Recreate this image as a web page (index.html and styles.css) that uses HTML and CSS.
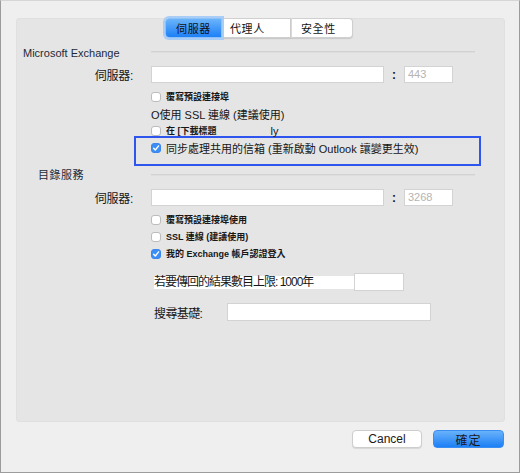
FILE: index.html
```html
<!DOCTYPE html>
<html lang="zh-Hant">
<head>
  <meta charset="UTF-8">
  <meta name="viewport" content="width=device-width, initial-scale=1.0">
  <title>Exchange 帳戶設定</title>
  <link rel="stylesheet" href="styles.css">
</head>
<body>
  <div class="window">
    <div class="panel">
      <div class="tabs">
        <span class="tab tab-active">伺服器</span>
        <span class="tab tab-mid">代理人</span>
        <span class="tab tab-last">安全性</span>
      </div>

      <div class="section-head">
        <span class="head-title">Microsoft Exchange</span>
        <span class="rule"></span>
      </div>
      <div class="field-row">
        <span class="field-label">伺服器:</span>
        <span class="input wide"></span>
        <span class="colon">:</span>
        <span class="input port">443</span>
      </div>
      <div class="checks">
        <div class="check-row"><span class="box"></span><span class="small">覆寫預設連接埠</span></div>
        <div class="check-row plain">O使用 SSL 連線 (建議使用)</div>
        <div class="check-row"><span class="box"></span><span class="small">在 [下載標題</span><span class="trail">ly</span></div>
        <div class="highlight">
          <div class="check-row plain"><span class="box box-on"><svg viewBox="0 0 10 10" width="10" height="10"><path d="M2.6 5.2 L4.3 7 L7.6 2.9" fill="none" stroke="#fff" stroke-width="1.4" stroke-linecap="round" stroke-linejoin="round"/></svg></span>同步處理共用的信箱 (重新啟動 Outlook 讓變更生效)</div>
        </div>
      </div>

      <div class="section-head head-two">
        <span class="head-title indent">目錄服務</span>
        <span class="rule"></span>
      </div>
      <div class="field-row row-two">
        <span class="field-label">伺服器:</span>
        <span class="input wide"></span>
        <span class="colon">:</span>
        <span class="input port">3268</span>
      </div>
      <div class="checks">
        <div class="check-row"><span class="box"></span><span class="small">覆寫預設連接埠使用</span></div>
        <div class="check-row"><span class="box"></span><span class="small">SSL 連線 (建議使用)</span></div>
        <div class="check-row"><span class="box box-on"><svg viewBox="0 0 10 10" width="10" height="10"><path d="M2.6 5.2 L4.3 7 L7.6 2.9" fill="none" stroke="#fff" stroke-width="1.4" stroke-linecap="round" stroke-linejoin="round"/></svg></span><span class="small">我的 Exchange 帳戶認證登入</span></div>
      </div>

      <div class="limit-row">
        <span class="limit-text">若要傳回的結果數目上限: 1000年</span>
        <span class="input limit"></span>
      </div>
      <div class="search-row">
        <span class="search-label">搜尋基礎:</span>
        <span class="input search"></span>
      </div>
    </div>

    <div class="actions">
      <button class="btn btn-cancel">Cancel</button>
      <button class="btn btn-ok">確定</button>
    </div>
  </div>
</body>
</html>
```

FILE: styles.css
```css
body{
  margin: 0;
  background-color: #ececec;
  font-family: "Liberation Sans", "Noto Sans CJK TC", sans-serif;
  color: #161616;
}
.window{
  width: 520px;
  height: 473px;
  box-sizing: border-box;
  border: 1px solid #9c9c9c;
  border-top-color: #d6d6d6;
  background-color: #efefef;
  padding: 27px 14px 0 15px;
}
.panel{
  height: 404px;
  background-color: #e5e5e5;
  border-radius: 4px;
  box-shadow: inset 0 0 0 1px #e0e0e0;
}

/* tabs */
.tabs{
  display: flex;
  justify-content: center;
  margin-top: -10px;
  padding-right: 3px;
  height: 20px;
}
.tab{
  height: 20px;
  box-sizing: border-box;
  font-size: 11px;
  letter-spacing: 0.6px;
  line-height: 20px;
  background-color: #fff;
  border: 1px solid #cfcfcf;
  box-shadow: 0 1px 1px rgba(0,0,0,0.12);
}
.tab-active{
  width: 57px;
  text-align: center;
  border-radius: 4px 0 0 4px;
  border-color: #8fc0f6;
  background: linear-gradient(#6bb4fb, #1c80f6);
  box-shadow: 0 0 0 2px #a8cdf7;
  color: #101010;
  position: relative;
}
.tab-mid{
  width: 69px;
  padding-left: 8px;
  border-left: none;
}
.tab-last{
  width: 62px;
  padding-left: 9px;
  border-left: 1px solid #d8d8d8;
  border-radius: 0 4px 4px 0;
}

/* section headers */
.section-head{
  display: flex;
  height: 18px;
  margin-top: 6px;
  align-items: center;
}
.head-title{
  width: 135px;
  box-sizing: border-box;
  padding-left: 7px;
  font-size: 11px;
  color: #1d2a38;
}
.head-title.indent{
  padding-left: 22px;
  letter-spacing: 0.5px;
}
.rule{
  align-self: flex-start;
  margin-top: 7px;
  width: 324px;
  height: 1px;
  background-color: #d2d2d2;
  border-bottom: 1px solid #dedede;
}
.head-two{
  height: 15px;
  margin-top: 0;
}
.head-two .rule{
  margin-top: 8px;
}

/* server rows */
.field-row{
  display: flex;
  align-items: center;
  height: 17px;
  margin-top: 4px;
}
.row-two{
  margin-top: 8px;
}
.field-label{
  width: 135px;
  box-sizing: border-box;
  padding-right: 18px;
  text-align: right;
  font-size: 12px;
  letter-spacing: -0.3px;
}
.input{
  display: block;
  box-sizing: border-box;
  height: 17px;
  background-color: #fff;
  border: 1px solid #d3d3d3;
}
.wide{
  width: 233px;
}
.colon{
  width: 20px;
  text-align: center;
  font-size: 12px;
  font-weight: bold;
}
.port{
  width: 49px;
  padding-left: 3px;
  font-size: 11px;
  line-height: 15px;
  color: #b4b4b4;
}

/* checkbox rows */
.checks{
  padding-left: 135px;
  margin-top: 5px;
}
.check-row{
  display: flex;
  align-items: center;
  height: 17px;
  font-size: 11px;
}
.box{
  width: 10px;
  height: 10px;
  box-sizing: border-box;
  border: 1px solid #bcbcbc;
  border-radius: 3px;
  background-color: #fff;
  margin-right: 5px;
  flex: none;
}
.box svg{
  display: block;
  margin: -1px;
}
.box-on{
  background-color: #3c8ef6;
  border-color: #3a86ea;
}
.small{
  font-size: 9px;
  font-weight: bold;
}
.trail{
  margin-left: 54px;
  font-size: 11px;
}
.plain{
  font-size: 11px;
}
.highlight{
  margin: -3px 0 0 -17px;
  width: 347px;
  height: 30px;
  box-sizing: border-box;
  border: 2px solid #2e55ee;
  padding: 1px 0 0 15px;
}

/* bottom fields */
.limit-row{
  display: flex;
  align-items: center;
  height: 18px;
  margin-top: 11px;
  padding-left: 138px;
}
.limit-text{
  width: 200px;
  background-color: #fff;
  font-size: 12px;
  line-height: 13px;
  letter-spacing: -1px;
}
.limit{
  width: 50px;
  height: 18px;
}
.search-row{
  display: flex;
  align-items: center;
  height: 18px;
  margin-top: 12px;
  padding-left: 138px;
}
.search-label{
  width: 73px;
  font-size: 12px;
  letter-spacing: -0.6px;
}
.search{
  width: 204px;
  height: 18px;
}

/* buttons */
.actions{
  display: flex;
  justify-content: flex-end;
  gap: 11px;
  margin-top: 8px;
  padding-right: 1px;
}
.btn{
  height: 18px;
  box-sizing: border-box;
  border-radius: 4px;
  font-family: "Liberation Sans", "Noto Sans CJK TC", sans-serif;
  font-size: 12px;
  padding: 0;
  color: #1a1a1a;
  cursor: pointer;
}
.btn-cancel{
  width: 70px;
  background-color: #fff;
  border: 1px solid #cdcdcd;
  box-shadow: 0 1px 1px rgba(0,0,0,0.1);
}
.btn-ok{
  width: 71px;
  border: 1px solid #3a8ef2;
  background: linear-gradient(#69b2fb, #1c7ff5);
  letter-spacing: 1px;
}
```
